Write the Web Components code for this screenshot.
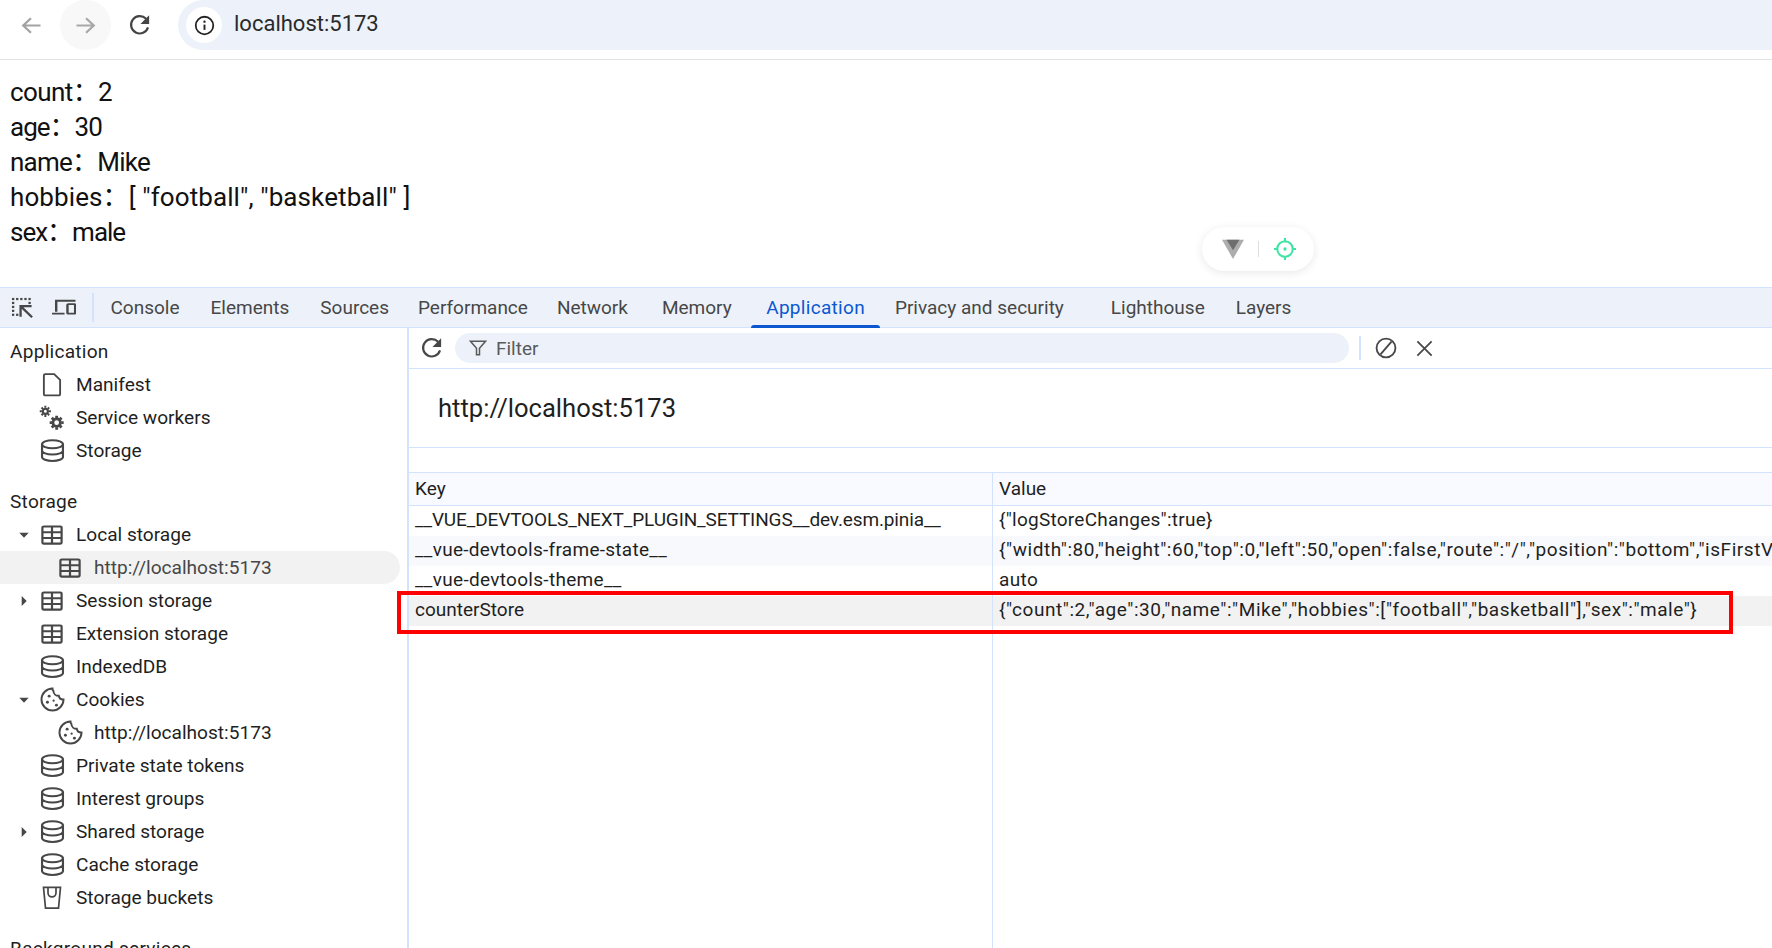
<!DOCTYPE html>
<html lang="en"><head><meta charset="utf-8"><title>localhost:5173</title>
<style>
html,body{margin:0;padding:0;height:948px;overflow:hidden;background:#fff}
body{position:relative;display:flex;flex-direction:column;font-family:Roboto,"Noto Sans CJK SC",sans-serif;color:#1f1f1f}
</style></head><body>
<browser-bar url="localhost:5173"></browser-bar>
<page-view>
  <div style="letter-spacing:-.6px">count：2</div><div style="letter-spacing:-1px">age：30</div><div style="letter-spacing:-.75px">name：Mike</div><div style="letter-spacing:.1px">hobbies：[ "football", "basketball" ]</div><div style="letter-spacing:-1px">sex：male</div>
</page-view>
<dev-tools>
  <tab-strip slot="tabs"></tab-strip>
  <side-nav slot="side">
    <nav-head>Application</nav-head>
    <nav-item icon="doc">Manifest</nav-item>
    <nav-item icon="gears">Service workers</nav-item>
    <nav-item icon="db">Storage</nav-item>
    <nav-head gap>Storage</nav-head>
    <nav-item icon="table" arrow="down">Local storage</nav-item>
    <nav-item icon="table" level="2" selected>http://localhost:5173</nav-item>
    <nav-item icon="table" arrow="right">Session storage</nav-item>
    <nav-item icon="table">Extension storage</nav-item>
    <nav-item icon="db">IndexedDB</nav-item>
    <nav-item icon="cookie" arrow="down">Cookies</nav-item>
    <nav-item icon="cookie" level="2">http://localhost:5173</nav-item>
    <nav-item icon="db">Private state tokens</nav-item>
    <nav-item icon="db">Interest groups</nav-item>
    <nav-item icon="db" arrow="right">Shared storage</nav-item>
    <nav-item icon="db">Cache storage</nav-item>
    <nav-item icon="bucket">Storage buckets</nav-item>
    <nav-head gap>Background services</nav-head>
  </side-nav>
  <storage-view slot="main" origin="http://localhost:5173"></storage-view>
</dev-tools>
<script>
const ICONS={
 back:'<path d="M20 12H5M11.5 5 4.6 12l6.9 7" fill="none" stroke="currentColor" stroke-width="2"/>',
 forward:'<path d="M4 12h15M12.5 5l6.9 7-6.9 7" fill="none" stroke="currentColor" stroke-width="2"/>',
 reload:'<path d="M19.4 14.2A8 8 0 1 1 17.6 6.3" fill="none" stroke="currentColor" stroke-width="2"/><path d="M20.4 3v8h-8z" fill="currentColor"/>',
 info:'<circle cx="12" cy="12" r="10" fill="none" stroke="currentColor" stroke-width="2"/><path d="M12 11v6" stroke="currentColor" stroke-width="2.2"/><circle cx="12" cy="7.6" r="1.35" fill="currentColor"/>',
 doc:'<path d="M4.5 3.5a1.5 1.5 0 0 1 1.5-1.5h8l5.5 5.500V21a1.500 1.500 0 0 1-1.500 1.500H6A1.500 1.500 0 0 1 4.500 21z" fill="none" stroke="currentColor" stroke-width="1.700"/>',
 gears:'<g fill="none" stroke="currentColor"><circle cx="6.300" cy="6.300" r="2.200" stroke-width="1.800"/><path d="M6.300 1.500v1.800M6.300 9.300v1.800M1.500 6.300h1.800M9.300 6.300h1.800M3 3l1.200 1.200M8.400 8.400 9.600 9.600M3 9.600l1.200-1.200M8.400 4.200 9.600 3" stroke-width="1.700"/><circle cx="16" cy="16" r="3.200" stroke-width="2.300"/><path d="M16 10v2M16 20v2M10 16h2M20 16h2M11.800 11.800l1.500 1.500M18.700 18.700l1.500 1.500M11.800 20.200l1.500-1.500M18.700 13.300l1.500-1.500" stroke-width="2.400"/></g>',
 db:'<g fill="none" stroke="currentColor" stroke-width="1.900"><ellipse cx="12" cy="6" rx="9.300" ry="3.800"/><path d="M2.700 6v12.200c0 2.100 4.200 3.800 9.300 3.800s9.300-1.700 9.300-3.800V6M2.700 12.100c0 2.100 4.200 3.800 9.300 3.800s9.300-1.700 9.300-3.800"/></g>',
 table:'<g fill="none" stroke="currentColor" stroke-width="2.200"><rect x="2.400" y="2.600" width="19.200" height="18.800" rx="1.500"/><path d="M2.400 8.900h19.200M2.400 15.200h19.200M12 2.600v18.800"/></g>',
 cookie:'<path d="M12 2.200a9.800 9.800 0 1 0 9.800 9.800 4 4 0 0 1-4.200-3.300A4.600 4.600 0 0 1 12.800 4.400 3 3 0 0 1 12 2.200z" fill="none" stroke="currentColor" stroke-width="1.700"/><g fill="currentColor"><circle cx="9" cy="9" r="1.300"/><circle cx="7.500" cy="14.500" r="1.300"/><circle cx="13" cy="13" r="1"/><circle cx="15.500" cy="17" r="1.300"/></g>',
 bucket:'<g fill="none" stroke="currentColor" stroke-width="1.700"><path d="M3.500 2.200h17l-2 20h-13z"/><path d="M8 2.200v5.300a4 4 0 0 0 8 0V2.200"/></g>',
 down:'<path d="M5 8.500h14L12 16z" fill="currentColor"/>',
 right:'<path d="M8.500 4.500 16 12l-7.500 7.500z" fill="currentColor"/>',
 inspect:'<g fill="currentColor"><rect x="1" y="1" width="2.400" height="2.400"/><rect x="5.300" y="1" width="2.400" height="2.400"/><rect x="9.600" y="1" width="2.400" height="2.400"/><rect x="13.900" y="1" width="2.400" height="2.400"/><rect x="18.200" y="1" width="2.400" height="2.400"/><rect x="1" y="5.300" width="2.400" height="2.400"/><rect x="1" y="9.600" width="2.400" height="2.400"/><rect x="1" y="13.900" width="2.400" height="2.400"/><rect x="1" y="18.200" width="2.400" height="2.400"/><rect x="5.300" y="18.200" width="2.400" height="2.400"/><rect x="18.200" y="5.300" width="2.400" height="2.400"/></g><path d="M10 21.500V10h11.500M10.500 10.500 22 22" fill="none" stroke="currentColor" stroke-width="2.400"/>',
 device:'<path d="M5 17.500V3.500h18.500M1 19.800h12" fill="none" stroke="currentColor" stroke-width="2.300"/><rect x="15.800" y="7.800" width="7.400" height="12" rx=".8" fill="none" stroke="currentColor" stroke-width="2.300"/>',
 filter:'<path d="M2 3h20l-8 9.500V21h-4v-8.500z" fill="none" stroke="currentColor" stroke-width="2"/>',
 block:'<circle cx="12" cy="12" r="10.300" fill="none" stroke="currentColor" stroke-width="2"/><path d="M18 5 6 19" stroke="currentColor" stroke-width="2"/>',
 close:'<path d="M3 3l18 18M21 3 3 21" stroke="currentColor" stroke-width="2.200"/>',
 vue:'<path d="M0 1h24L12 24z" fill="#adadad"/><path d="M5 1h14L12 13.500z" fill="#6e6e6e"/>',
 target:'<g fill="none" stroke="#3fe3a3"><circle cx="12" cy="12" r="8.500" stroke-width="2.200"/><path d="M12 0v4.500M12 19.500V24M0 12h4.500M19.500 12H24" stroke-width="2.200"/></g><circle cx="12" cy="12" r="1.800" fill="#3fe3a3"/>'
};
class DtIcon extends HTMLElement{
 connectedCallback(){
  const w=this.getAttribute('w')||24,h=this.getAttribute('h')||w;
  this.attachShadow({mode:'open'}).innerHTML=`<style>:host{display:inline-flex;flex:none;width:${w}px;height:${h}px;color:inherit}svg{display:block;width:100%;height:100%}</style><svg viewBox="0 0 24 24" preserveAspectRatio="none">${ICONS[this.getAttribute('name')]||''}</svg>`;
 }
}
customElements.define('dt-icon',DtIcon);

class BrowserBar extends HTMLElement{
 connectedCallback(){
  this.attachShadow({mode:'open'}).innerHTML=`<style>
  :host{display:flex;flex:none;height:60px;box-sizing:border-box;border-bottom:1px solid #e2e2e2;background:#fff;align-items:flex-start}
  .nav{display:flex;height:50px;width:178px;flex:none;align-items:center;position:relative}
  .btn{display:flex;align-items:center;justify-content:center;width:51px;height:50px;border-radius:25px;flex:none}
  .b1{margin-left:6px;color:#a3a3a3;margin-right:3px}
  .b2{color:#a8a8a8;background:#f8f8f8;margin-right:3px}
  .b3{color:#444;}
  .addr{flex:1;height:50px;background:#ecf1fa;border-radius:25px 0 0 25px;display:flex;align-items:center;padding-left:8px;box-sizing:border-box}
  .ic{width:36px;height:36px;border-radius:50%;background:#fff;display:flex;align-items:center;justify-content:center;color:#222}
  .url{margin-left:12px;font-size:22px;color:#2a2a2a;line-height:50px;position:relative;top:-1px}
  </style>
  <div class="nav"><div class="btn b1"><dt-icon name="back" w="27" h="25"></dt-icon></div><div class="btn b2"><dt-icon name="forward" w="27" h="25"></dt-icon></div><div class="btn b3"><dt-icon name="reload" w="26"></dt-icon></div></div>
  <div class="addr"><div class="ic"><dt-icon name="info" w="21"></dt-icon></div><span class="url">${this.getAttribute('url')}</span></div>`;
 }
}
customElements.define('browser-bar',BrowserBar);

class PageView extends HTMLElement{
 constructor(){super();this.attachShadow({mode:'open'}).innerHTML=`<style>
 :host{display:block;flex:none;height:227px;box-sizing:border-box;padding:15px 10px 0;font-size:26px;line-height:35px;color:#111;position:relative}
 .pill{position:absolute;left:1202px;top:167px;width:112px;height:44px;border-radius:22px;background:#fff;box-shadow:0 2px 10px rgba(0,0,0,.09);display:flex;align-items:center;box-sizing:border-box}
 .sep{width:1px;height:16px;background:#dedede;margin:0 15px 0 14px}
 </style><slot></slot><div class="pill"><dt-icon name="vue" w="22" h="20" style="margin-left:20px"></dt-icon><span class="sep"></span><dt-icon name="target" w="22"></dt-icon></div>`;}
}
customElements.define('page-view',PageView);

class TabStrip extends HTMLElement{
 connectedCallback(){
  /* label, state, extra left margin, letter-spacing: the reference's UI font differs slightly in glyph widths */
  const tabs=[['Console',0,0,0],['Elements',0,0,0],['Sources',0,0,0],['Performance',0,-2,0],['Network',0,-2,0],['Memory',0,3,0],['Application',1,3.5,.3],['Privacy and security',0,-1,0],['Lighthouse',2,2,0],['Layers',0,0,0]];
  this.attachShadow({mode:'open'}).innerHTML=`<style>
  :host{display:flex;height:41px;box-sizing:border-box;background:#edf2fa;border-top:1px solid #d3e3fd;border-bottom:1px solid #d3e3fd;align-items:stretch;font-size:19px;color:#474747}
  .tools{display:flex;align-items:center;width:93px;flex:none;box-sizing:border-box;padding-left:11px;gap:17px;position:relative}
  .tools::after{content:"";position:absolute;left:92px;top:5px;bottom:5px;width:1.500px;background:#d3e3fd}
  .tab{display:flex;align-items:center;padding:0 15.500px;white-space:nowrap;position:relative;height:39px}
  .tab.on{color:#0b57d0}
  .tab.on::after{content:"";position:absolute;left:0;right:0;bottom:-1px;height:3px;background:#0b57d0;border-radius:3px 3px 0 0}
  .list{display:flex;padding-left:2px}
  </style><div class="tools"><dt-icon name="inspect" w="23" h="22"></dt-icon><dt-icon name="device" w="25" h="19"></dt-icon></div><div class="list">${tabs.map(t=>`<div class="tab${t[1]==1?' on':''}" style="margin-left:${t[2]+(t[1]==2?14:0)}px;letter-spacing:${t[3]}px">${t[0]}</div>`).join('')}</div>`;
 }
}
customElements.define('tab-strip',TabStrip);

class SideNav extends HTMLElement{
 constructor(){super();this.attachShadow({mode:'open'}).innerHTML=`<style>:host{display:block;flex:none;box-sizing:border-box;padding-top:7px;overflow:hidden;font-size:19.100px;color:#1f1f1f;border-right:2px solid #d3e3fd;width:409px}</style><slot></slot>`;}
}
customElements.define('side-nav',SideNav);

class NavHead extends HTMLElement{
 constructor(){super();this.attachShadow({mode:'open'}).innerHTML=`<style>:host{display:flex;align-items:center;height:33px;padding-left:10px;white-space:nowrap;letter-spacing:.25px}:host([gap]){margin-top:18px}</style><slot></slot>`;}
}
customElements.define('nav-head',NavHead);

class NavItem extends HTMLElement{
 connectedCallback(){
  const lvl=+(this.getAttribute('level')||1),a=this.getAttribute('arrow'),ic=this.getAttribute('icon');
  const sizes={doc:[26,25],gears:[28,28],db:[27,25],table:[24,22],cookie:[27,27],bucket:[24,25]};
  const [w,h]=sizes[ic];
  this.attachShadow({mode:'open'}).innerHTML=`<style>
  :host{display:flex;align-items:center;height:33px;white-space:nowrap;width:400px;box-sizing:border-box;padding-left:${lvl==2?50:16}px;border-radius:0 17px 17px 0;color:#1f1f1f}
  :host([selected]){background:#f2f2f2;color:#474747}
  .ar{width:16px;height:16px;flex:none;color:#474747;display:flex}
  .slot{width:26px;flex:none;display:flex;justify-content:center;color:#474747}
  .sp{width:7px;flex:none}
  .t{margin-left:11px}
  ${lvl==2?'.ar{display:none}':''}
  </style><span class="ar">${a?`<dt-icon name="${a}" w="16"></dt-icon>`:''}</span><span class="sp"></span><span class="slot"><dt-icon name="${ic}" w="${w}" h="${h}"></dt-icon></span><span class="t"><slot></slot></span>`;
 }
}
customElements.define('nav-item',NavItem);

class StorageView extends HTMLElement{
 connectedCallback(){
  const rows=[['__VUE_DEVTOOLS_NEXT_PLUGIN_SETTINGS__dev.esm.pinia__','{"logStoreChanges":true}',.25,-.13],
  ['__vue-devtools-frame-state__','{"width":80,"height":60,"top":0,"left":50,"open":false,"route":"/","position":"bottom","isFirstV',.55,.28],
  ['__vue-devtools-theme__','auto',.4,.3],
  ['counterStore','{"count":2,"age":30,"name":"Mike","hobbies":["football","basketball"],"sex":"male"}',.55,0]];
  this.attachShadow({mode:'open'}).innerHTML=`<style>
  :host{display:flex;flex-direction:column;flex:1;min-width:0;font-size:19px;color:#1f1f1f;overflow:hidden}
  .bar{display:flex;align-items:center;height:41px;flex:none;box-sizing:border-box;border-bottom:1px solid #d3e3fd;color:#474747}
  .rl{margin-left:10px;margin-right:10px;display:flex}
  .filter{width:894px;height:30px;border-radius:15px;background:#edf2fa;display:flex;align-items:center;padding-left:14px;box-sizing:border-box;color:#5a5a5a;gap:9px}
  .vs{width:1.500px;height:24px;background:#d3e3fd;margin:0 14px 0 10px}
  .org{flex:none;height:79px;box-sizing:border-box;border-bottom:1px solid #d3e3fd;padding-left:29px;display:flex;align-items:center;font-size:25.600px;color:#1f1f1f}
  .tbl{flex:1;margin-top:24px;display:flex;flex-direction:column;min-height:0}
  .r{display:grid;grid-template-columns:584px 1fr;height:30px;flex:none}
  .r>div{padding-left:6px;line-height:28px;white-space:nowrap;overflow:hidden}
  .r>div:first-child{border-right:1px solid #d3e3fd}
  .h{background:#f8faff;border-top:1px solid #d3e3fd;border-bottom:1px solid #d3e3fd;height:32px}
  .h>div{line-height:31px}
  .odd{background:#f8f9fd}
  .sel{background:#f2f2f2}
  .fill{flex:1}
  </style>
  <div class="bar"><span class="rl"><dt-icon name="reload" w="26"></dt-icon></span><div class="filter"><dt-icon name="filter" w="18"></dt-icon><span>Filter</span></div><span class="vs"></span><dt-icon name="block" w="22"></dt-icon><dt-icon name="close" w="19" style="margin-left:18px"></dt-icon></div>
  <div class="org">${this.getAttribute('origin')}</div>
  <div class="tbl"><div class="r h"><div>Key</div><div>Value</div></div>
  ${rows.map((r,i)=>`<div class="r ${i==1?'odd':''} ${i==3?'sel':''}"><div style="letter-spacing:${r[3]}px"></div><div style="letter-spacing:${r[2]}px"></div></div>`).join('')}
  <div class="r fill"><div></div><div></div></div></div>`;
  const rs=this.shadowRoot.querySelectorAll('.r:not(.h):not(.fill)');
  rows.forEach((r,i)=>{rs[i].children[0].textContent=r[0];rs[i].children[1].textContent=r[1];});
 }
}
customElements.define('storage-view',StorageView);

class DevTools extends HTMLElement{
 constructor(){super();this.attachShadow({mode:'open'}).innerHTML=`<style>
 :host{display:flex;flex-direction:column;flex:1;min-height:0;position:relative;overflow:hidden}
 .body{display:flex;flex:1;min-height:0}
 .mark{position:absolute;left:397px;top:304px;width:1336px;height:43px;box-sizing:border-box;border:4px solid #f00}
 </style><slot name="tabs"></slot><div class="body"><slot name="side"></slot><slot name="main"></slot></div><div class="mark"></div>`;}
}
customElements.define('dev-tools',DevTools);
</script>
</body></html>
